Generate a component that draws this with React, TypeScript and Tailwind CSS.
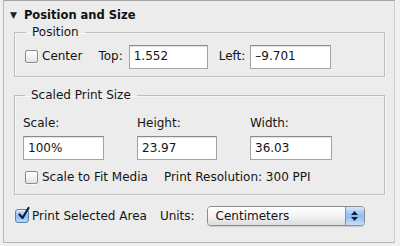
import React from "react";

const Checkbox = ({ checked = false }: { checked?: boolean }) =>
  checked ? (
    <div className="relative w-[14px] h-[14px] rounded-[3px] border border-[#5b7fb0] bg-gradient-to-b from-[#cfe4fb] via-[#8fbcf0] to-[#b9d8fa] shadow-[inset_0_1px_0_rgba(255,255,255,0.6)]">
      <svg
        viewBox="0 0 14 14"
        className="absolute left-[1px] top-[-3px] w-[14px] h-[14px] overflow-visible"
      >
        <path
          d="M2.5 7.5 L5.5 11 L11.5 1"
          fill="none"
          stroke="#0d1f3c"
          strokeWidth="2.2"
          strokeLinecap="round"
          strokeLinejoin="round"
        />
      </svg>
    </div>
  ) : (
    <div className="w-[13px] h-[13px] rounded-[2px] border border-[#8c8c8c] bg-gradient-to-b from-white to-[#e4e4e4] shadow-[0_1px_0_rgba(255,255,255,0.7)]" />
  );

const Field = ({ value, className }: { value: string; className: string }) => (
  <div
    className={`h-[24px] flex items-center pl-[4px] bg-white border border-[#a3a3a3] border-t-[#8a8a8a] shadow-[inset_0_1px_1px_rgba(0,0,0,0.12)] ${className}`}
  >
    {value}
  </div>
);

const App = () => {
  return (
    <div className="w-[400px] h-[246px] bg-[#f0f0f0] text-[#141414] text-[12px] leading-[15px] font-['DejaVu_Sans',sans-serif]">
      <div className="ml-[3px] w-[392px] h-[243px] border border-[#b8b8b8] border-t-[#a4a4a4] border-r-[#cfcfcf] bg-[#ececec]">
        <div className="flex items-center pt-[6px] pl-[6px] h-[22px]">
          <span className="text-[9px] leading-[9px] text-[#222] mt-[1px]">▼</span>
          <span className="ml-[7px] font-bold text-[11.5px] text-[#111]">
            Position and Size
          </span>
        </div>

        <fieldset className="mt-[1px] ml-[10px] w-[371px] border border-[#bdbdbd] shadow-[inset_1px_1px_0_#f7f7f7,1px_1px_0_#f7f7f7] pl-[10px] pb-[7px]">
          <legend className="ml-[1px] px-[6px] leading-[16px]">Position</legend>
          <div className="flex items-center h-[25px] mt-[4px]">
            <Checkbox />
            <span className="ml-[4px]">Center</span>
            <span className="ml-[16px]">Top:</span>
            <Field value="1.552" className="ml-[6px] w-[79px]" />
            <span className="ml-[11px]">Left:</span>
            <Field value="–9.701" className="ml-[5px] w-[81px]" />
          </div>
        </fieldset>

        <fieldset className="mt-[10px] ml-[10px] w-[371px] border border-[#bdbdbd] shadow-[inset_1px_1px_0_#f7f7f7,1px_1px_0_#f7f7f7] pl-[8px] pb-[9px]">
          <legend className="ml-[2px] px-[6px] leading-[16px]">
            Scaled Print Size
          </legend>
          <div className="flex mt-[13px]">
            <div className="w-[114px] flex flex-col gap-[5px]">
              <span>Scale:</span>
              <Field value="100%" className="w-[81px]" />
            </div>
            <div className="w-[113px] flex flex-col gap-[5px]">
              <span>Height:</span>
              <Field value="23.97" className="w-[80px]" />
            </div>
            <div className="flex flex-col gap-[5px]">
              <span>Width:</span>
              <Field value="36.03" className="w-[82px]" />
            </div>
          </div>
          <div className="flex items-center mt-[10px] pl-[2px]">
            <Checkbox />
            <span className="ml-[4px]">Scale to Fit Media</span>
            <span className="ml-[16px]">Print Resolution: 300 PPI</span>
          </div>
        </fieldset>

        <div className="flex items-center mt-[11px] pl-[11px] h-[20px]">
          <Checkbox checked />
          <span className="ml-[3px]">Print Selected Area</span>
          <span className="ml-[13px]">Units:</span>
          <div className="ml-[12px] w-[158px] h-[20px] flex rounded-[4px] border border-[#8d8d8d] shadow-[0_1px_1px_rgba(0,0,0,0.15)] overflow-hidden">
            <div className="flex-1 flex items-center pl-[8px] bg-gradient-to-b from-white via-[#f4f4f4] to-[#dcdcdc]">
              Centimeters
            </div>
            <div className="w-[19px] flex flex-col items-center justify-center gap-[2px] border-l border-[#6f93c4] bg-gradient-to-b from-[#d6e8fb] via-[#8cbcf1] to-[#c4defb]">
              <svg viewBox="0 0 7 4" className="w-[7px] h-[4px]">
                <path d="M0 4 L3.5 0 L7 4 Z" fill="#10203a" />
              </svg>
              <svg viewBox="0 0 7 4" className="w-[7px] h-[4px]">
                <path d="M0 0 L3.5 4 L7 0 Z" fill="#10203a" />
              </svg>
            </div>
          </div>
        </div>
      </div>
    </div>
  );
};

export default App;
